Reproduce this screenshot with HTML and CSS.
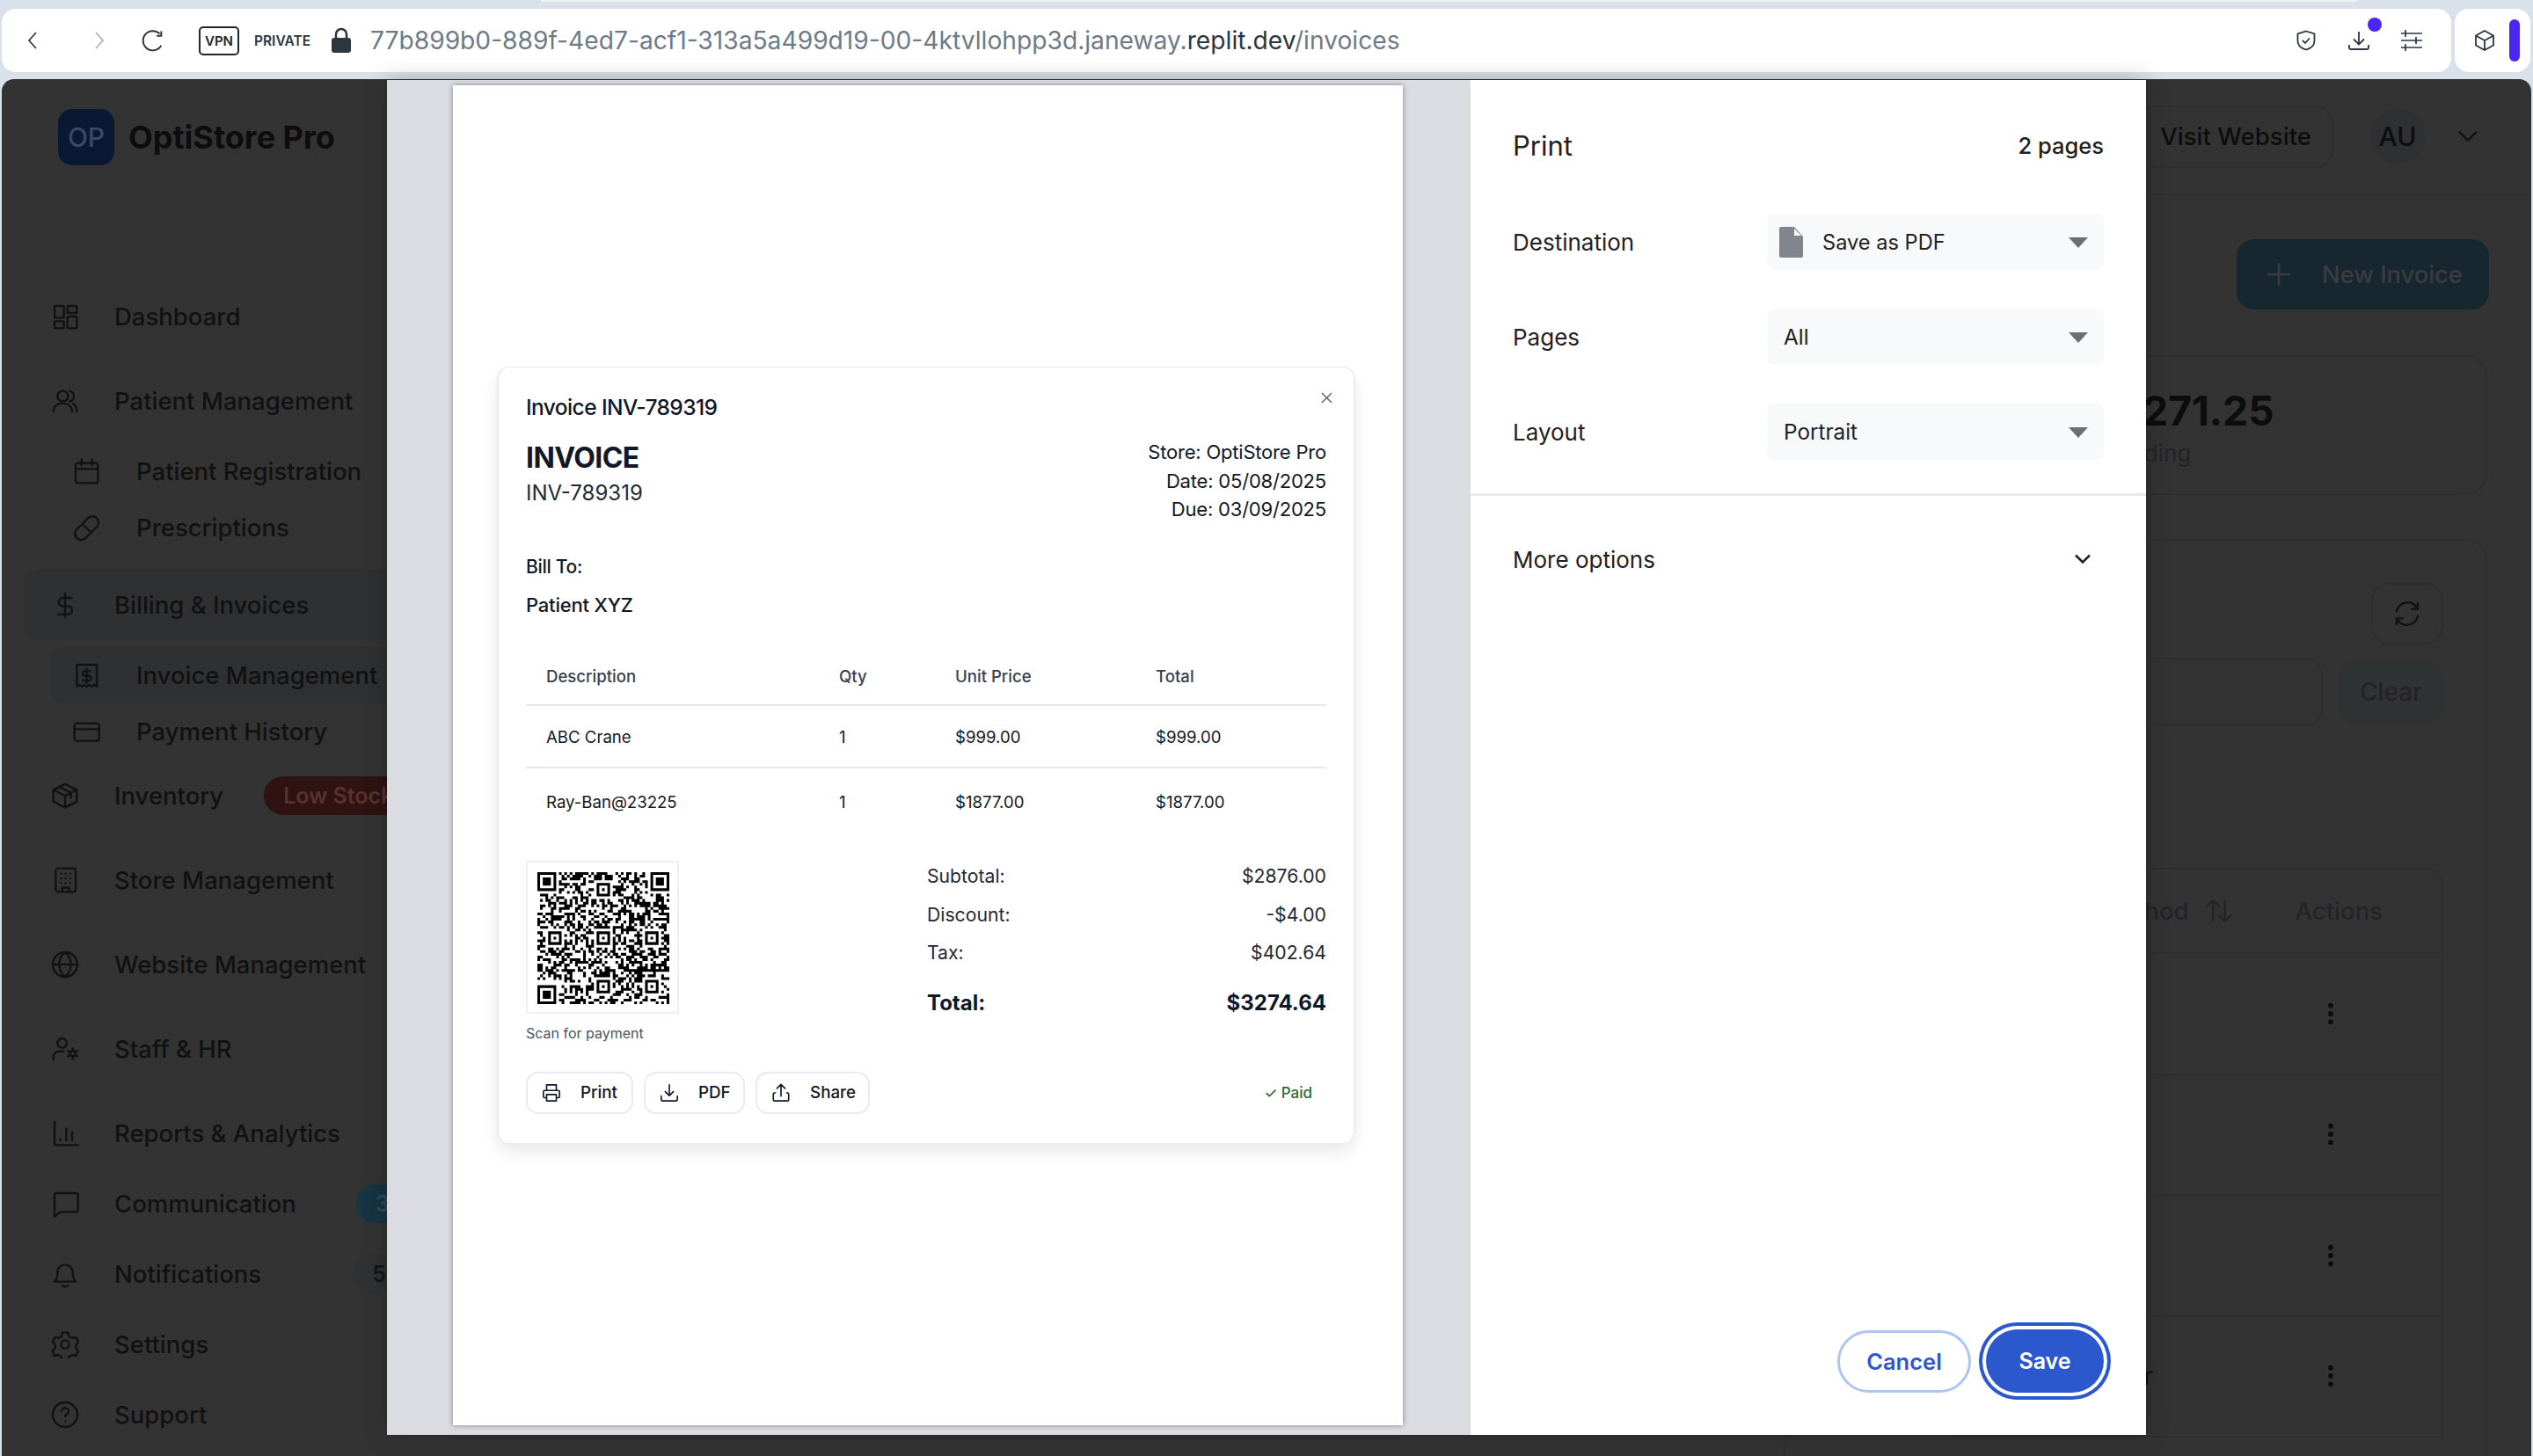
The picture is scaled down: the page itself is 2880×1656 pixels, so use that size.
FILE: index.html
```html
<!DOCTYPE html>
<html lang="en">
<head>
<meta charset="utf-8">
<title>Invoices</title>
<link rel="stylesheet" href="styles.css">
</head>
<body>
<div class="tab-strip"></div>
<div class="chrome">
  <div class="urlbar">
    <svg class="tb back" viewBox="0 0 24 24"><path d="M15 3 7 12l8 9"/></svg>
    <svg class="tb fwd" viewBox="0 0 24 24"><path d="m9 3 8 9-8 9"/></svg>
    <svg class="tb reload" viewBox="0 0 24 24"><path d="M18.5 5.5A9.5 9.5 0 1 0 20 17M20 3v4.5h-4.500"/></svg>
    <span class="vpn">VPN</span>
    <span class="private">PRIVATE</span>
    <svg class="lock" viewBox="0 0 24 30"><path class="lock-loop" d="M6 14V8a6 6 0 0 1 12 0v6"/><rect class="lock-body" x="1" y="12" width="22" height="17" rx="3"/></svg>
    <span class="url">77b899b0-889f-4ed7-acf1-313a5a499d19-00-4ktvllohpp3d.janeway.<b>replit.dev</b>/invoices</span>
    <span class="ext">
      <svg class="tb2" viewBox="0 0 24 24"><path d="M12 1.500 21.500 4.500v8c0 5-4 8.500-9.500 10-5.500-1.500-9.500-5-9.500-10v-8z"/><path d="m8 12 3 3 5-5.500"/></svg>
      <span class="dl"><svg class="tb2" viewBox="0 0 24 24"><path d="M12 2v14M6 10.500l6 6 6-6M1 17v3a2 2 0 0 0 2 2h18a2 2 0 0 0 2-2v-3"/></svg><i class="dot"></i></span>
      <svg class="tb2 sliders" viewBox="0 0 24 24"><path d="M0 4h24M0 12h24M0 20h24"/><path d="M5 0v8M17 8v8M5 16v8"/></svg>
    </span>
  </div>
  <div class="urlbar-side">
    <svg class="tb2" viewBox="0 0 24 24"><path d="m12 1 10 5.500v11L12 23 2 17.500v-11zM2 6.500 12 12l10-5.500M12 12v11"/></svg>
    <i class="side-pill"></i>
  </div>
</div>

<div class="app">
  <aside class="sidebar">
    <div class="brand"><span class="logo">OP</span><span class="brand-name">OptiStore Pro</span></div>
    <nav class="nav">
      <a class="item"><svg class="ic" viewBox="0 0 24 24"><rect x="3" y="3" width="8" height="10" rx="1"/><rect x="14" y="3" width="8" height="6" rx="1"/><rect x="14" y="12" width="8" height="10" rx="1"/><rect x="3" y="16" width="8" height="6" rx="1"/></svg>Dashboard</a>
      <a class="item"><svg class="ic" viewBox="0 0 24 24"><circle cx="10" cy="8" r="4.500"/><path d="M2 21c0-4.500 3.500-7 8-7s8 2.500 8 7M16 3.600a4.500 4.500 0 0 1 0 8.800M19 14.500c2 1 3 3.500 3 6.500"/></svg>Patient Management</a>
      <div class="sub">
        <a class="subitem"><svg class="ic" viewBox="0 0 24 24"><rect x="3" y="5" width="19" height="17" rx="2"/><path d="M3 10h19M8 2v5M17 2v5"/></svg>Patient Registration</a>
        <a class="subitem"><svg class="ic" viewBox="0 0 24 24"><path d="M4 13.500 13.500 4a5.300 5.300 0 0 1 7.500 7.500L11.500 21A5.300 5.300 0 0 1 4 13.500zM8.700 8.800l7.500 7.500"/></svg>Prescriptions</a>
      </div>
      <a class="item active"><svg class="ic" viewBox="0 0 24 24"><path d="M12 2v20M17.500 6H10a3.500 3.500 0 0 0 0 7h4.500a3.500 3.500 0 0 1 0 7H6"/></svg>Billing &amp; Invoices</a>
      <div class="sub last">
        <a class="subitem active"><svg class="ic" viewBox="0 0 24 24"><path d="M4 3h17v18.500l-2-1.300-2 1.300-2-1.300-2.500 1.300-2-1.300-2 1.300-2.500-1.300-2 1.300z"/><path d="M15.500 8.500H11a2 2 0 0 0 0 4h3a2 2 0 0 1 0 4H9M12.500 6.500v12"/></svg>Invoice Management</a>
        <a class="subitem"><svg class="ic" viewBox="0 0 24 24"><rect x="2" y="5" width="21" height="15" rx="2"/><path d="M2 10h21"/></svg>Payment History</a>
      </div>
      <a class="item"><svg class="ic" viewBox="0 0 24 24"><path d="m12 2 10 5v10l-10 5-10-5V7zM2 7l10 5 10-5M12 12v10M7 4.500l10 5v4"/></svg>Inventory<span class="badge low">Low Stock</span></a>
      <a class="item"><svg class="ic" viewBox="0 0 24 24"><rect x="4" y="2" width="17" height="20" rx="2"/><path d="M9.500 22v-3.500h6V22M8.500 6.500h0M12.500 6.500h0M16.500 6.500h0M8.500 10.500h0M12.500 10.500h0M16.500 10.500h0M8.500 14.500h0M12.500 14.500h0M16.500 14.500h0"/></svg>Store Management</a>
      <a class="item"><svg class="ic" viewBox="0 0 24 24"><circle cx="12" cy="12" r="10.500"/><path d="M1.500 12h21M12 1.500c3.500 3 5 6.500 5 10.500s-1.500 7.500-5 10.500c-3.500-3-5-6.500-5-10.500s1.500-7.500 5-10.500z"/></svg>Website Management</a>
      <a class="item"><svg class="ic" viewBox="0 0 24 24"><circle cx="9.500" cy="7" r="4"/><path d="M2 21v-1.500c0-3.500 2.500-5.500 6-5.500h3"/><circle cx="18.500" cy="16" r="2.300"/><path d="M18.500 11.500v2M18.500 18.500v2M14.500 13.700l2 1.100M20.500 17.200l2 1.100M14.500 18.300l2-1.100M20.500 14.800l2-1.100"/></svg>Staff &amp; HR</a>
      <a class="item flush"><svg class="ic" viewBox="0 0 24 24"><path d="M3 2v18a2 2 0 0 0 2 2h18M8 18v-1M13 18V8M18 18v-7"/></svg>Reports &amp; Analytics</a>
      <a class="item flush"><svg class="ic" viewBox="0 0 24 24"><path d="M5 3h16a2 2 0 0 1 2 2v12a2 2 0 0 1-2 2H8l-5 4V5a2 2 0 0 1 2-2z"/></svg>Communication<span class="badge count-blue">3</span></a>
      <a class="item flush"><svg class="ic" viewBox="0 0 24 24"><path d="M3 18.500c2-2 2.500-3.500 2.500-8a6.500 6.500 0 0 1 13 0c0 4.500.5 6 2.500 8zM9.500 22c1.500 1 3.500 1 5 0"/></svg>Notifications<span class="badge count-gray">5</span></a>
      <a class="item flush"><svg class="ic" viewBox="0 0 24 24"><circle cx="12" cy="12" r="3.500"/><path d="M9.500 2h5l.8 3 2.800 1.600 3-.8 2.400 4.200-2.200 2.200v3.400l2.200 2-2.400 4.300-3-.9-2.800 1.600-.8 2.400h-5l-.8-2.400-2.800-1.600-3 .9L1.300 17.300l2.200-2v-3.400L1.300 9.700l2.400-3.900 3 .8 2.800-1.600z"/></svg>Settings</a>
      <a class="item flush"><svg class="ic" viewBox="0 0 24 24"><circle cx="12" cy="12" r="10.500"/><path d="M9 9a3 3 0 0 1 6 .5c0 2-3 2.300-3 4M12 17.500h0"/></svg>Support</a>
    </nav>
  </aside>

  <main class="main">
    <header class="topbar">
      <span class="visit">Visit Website</span>
      <span class="avatar">AU</span>
      <svg class="ic chev" viewBox="0 0 24 24"><path d="m5 8.500 7 7 7-7"/></svg>
    </header>
    <div class="content">
      <div class="title-row">
        <button class="new-btn"><svg class="ic plus" viewBox="0 0 24 24"><path d="M12 3v18M3 12h18"/></svg>New Invoice</button>
      </div>
      <section class="stat">
        <div class="stat-value">$12,271.25</div>
        <div class="stat-label">Outstanding</div>
      </section>
      <section class="list-card">
        <button class="icon-btn"><svg class="ic" viewBox="0 0 24 24"><path d="M3 10a9.500 9.500 0 0 1 17-3.500l1 1.500M21 3v5h-5M21 14a9.500 9.500 0 0 1-17 3.500L3 16M3 21v-5h5"/></svg></button>
        <div class="filters">
          <div class="search"></div>
          <button class="clear">Clear</button>
        </div>
        <div class="table">
          <div class="thead">
            <span>Payment Method</span>
            <svg class="ic sort" viewBox="0 0 24 24"><path d="M7 21V3M2 8l5-5 5 5M17 3v18M12 16l5 5 5-5"/></svg>
            <span class="actions-h">Actions</span>
          </div>
          <div class="trow"><svg class="ic kebab" viewBox="0 0 24 24"><circle cx="12" cy="5" r="1.300"/><circle cx="12" cy="12" r="1.300"/><circle cx="12" cy="19" r="1.300"/></svg></div>
          <div class="trow"><svg class="ic kebab" viewBox="0 0 24 24"><circle cx="12" cy="5" r="1.300"/><circle cx="12" cy="12" r="1.300"/><circle cx="12" cy="19" r="1.300"/></svg></div>
          <div class="trow"><svg class="ic kebab" viewBox="0 0 24 24"><circle cx="12" cy="5" r="1.300"/><circle cx="12" cy="12" r="1.300"/><circle cx="12" cy="19" r="1.300"/></svg></div>
          <div class="trow"><span class="method">Transfer</span><svg class="ic kebab" viewBox="0 0 24 24"><circle cx="12" cy="5" r="1.300"/><circle cx="12" cy="12" r="1.300"/><circle cx="12" cy="19" r="1.300"/></svg></div>
        </div>
      </section>
    </div>
  </main>
</div>

<div class="print-dialog">
  <div class="preview">
    <div class="sheet">
      <article class="invoice">
        <svg class="close" viewBox="0 0 14 14"><path d="m1 1 12 12M13 1 1 13"/></svg>
        <h2 class="inv-title">Invoice INV-789319</h2>
        <div class="inv-head">
          <div>
            <div class="inv-big">INVOICE</div>
            <div class="inv-no">INV-789319</div>
          </div>
          <div class="inv-meta">
            <div>Store: OptiStore Pro</div>
            <div>Date: 05/08/2025</div>
            <div>Due: 03/09/2025</div>
          </div>
        </div>
        <div class="bill-label">Bill To:</div>
        <div class="bill-name">Patient XYZ</div>
        <div class="inv-table">
          <div class="inv-row inv-th"><span>Description</span><span>Qty</span><span>Unit Price</span><span>Total</span></div>
          <div class="inv-row"><span>ABC Crane</span><span>1</span><span>$999.00</span><span>$999.00</span></div>
          <div class="inv-row no-line"><span>Ray-Ban@23225</span><span>1</span><span>$1877.00</span><span>$1877.00</span></div>
        </div>
        <div class="inv-foot">
          <div>
            <div class="qr-box"><svg id="qr" class="qr" viewBox="0 0 49 49" shape-rendering="geometricPrecision"></svg></div>
            <div class="scan">Scan for payment</div>
          </div>
          <div class="summary">
            <div class="sum-row"><span>Subtotal:</span><span>$2876.00</span></div>
            <div class="sum-row"><span>Discount:</span><span>-$4.00</span></div>
            <div class="sum-row"><span>Tax:</span><span>$402.64</span></div>
            <div class="sum-row sum-total"><span>Total:</span><span>$3274.64</span></div>
          </div>
        </div>
        <div class="inv-actions">
          <button class="act act-print"><svg class="act-ic" viewBox="0 0 24 24"><path d="M6 9V2h12v7M6 18H3.500A1.500 1.500 0 0 1 2 16.500v-6A1.500 1.500 0 0 1 3.500 9h17a1.500 1.500 0 0 1 1.500 1.500v6a1.500 1.500 0 0 1-1.500 1.500H18M6 14h12v8H6z"/></svg>Print</button>
          <button class="act act-pdf"><svg class="act-ic" viewBox="0 0 24 24"><path d="M12 2v13M7 10.500l5 5 5-5M2 16v4a2 2 0 0 0 2 2h16a2 2 0 0 0 2-2v-4"/></svg>PDF</button>
          <button class="act act-share"><svg class="act-ic" viewBox="0 0 24 24"><path d="M12 16V2M7 6.500l5-5 5 5M5 12H4a1.500 1.500 0 0 0-1.500 1.500v7A1.500 1.500 0 0 0 4 22h16a1.500 1.500 0 0 0 1.500-1.500v-7A1.500 1.500 0 0 0 20 12h-1"/></svg>Share</button>
          <span class="paid">✓ Paid</span>
        </div>
      </article>
    </div>
  </div>
  <div class="panel">
    <div class="panel-head"><span class="panel-title">Print</span><span class="panel-pages">2 pages</span></div>
    <div class="field first">
      <span class="field-label">Destination</span>
      <div class="select with-file">
        <svg class="file" viewBox="0 0 27 35"><path d="M2 0h15l10 11v22a2 2 0 0 1-2 2H2a2 2 0 0 1-2-2V2a2 2 0 0 1 2-2z"/><path class="fold" d="M17 2v8h8z"/></svg>
        <span>Save as PDF</span><i class="caret"></i>
      </div>
    </div>
    <div class="field">
      <span class="field-label">Pages</span>
      <div class="select"><span>All</span><i class="caret"></i></div>
    </div>
    <div class="field">
      <span class="field-label">Layout</span>
      <div class="select"><span>Portrait</span><i class="caret"></i></div>
    </div>
    <div class="divider"></div>
    <div class="more"><span>More options</span><svg class="more-chev" viewBox="0 0 24 24"><path d="m4 7.500 8 8 8-8"/></svg></div>
    <div class="panel-actions">
      <button class="btn-cancel">Cancel</button>
      <button class="btn-save">Save</button>
    </div>
  </div>
</div>
<script src="qr.js"></script>
</body>
</html>
```
FILE: styles.css
```css
* { box-sizing: border-box; }
html, body { margin: 0; height: 1656px; overflow: hidden; }
body { position: relative; background: #d9e2ea; font-family: Inter, "Liberation Sans", sans-serif; color: #171717; }
button { font: inherit; }

.tab-strip { height: 2px; margin: 0 200px 0 615px; background: #f0f3f6; }
.chrome { display: flex; gap: 4px; height: 72px; margin: 8px 3px 8px 2px; }
.urlbar { flex: 1; display: flex; align-items: center; background: #fff; border-radius: 16px; padding-left: 24px; }
.urlbar-side { width: 86px; display: flex; align-items: center; background: #fff; border-radius: 16px; padding-left: 22px; }
.tb { width: 24px; height: 24px; fill: none; stroke: #2b3640; stroke-width: 1.7; }
.tb.fwd { stroke: #a9b0b7; margin-left: 50px; }
.tb.reload { margin-left: 36px; width: 28px; height: 28px; }
.vpn { margin-left: 38px; width: 46px; height: 33px; border: 2px solid #1d2730; border-radius: 5px; font-size: 15px; font-weight: 600; line-height: 29px; text-align: center; color: #1d2730; }
.private { margin-left: 17px; font-size: 15.500px; font-weight: 600; color: #2b3640; width: 67px; white-space: nowrap; }
.lock { margin-left: 20px; width: 24px; height: 30px; }
.lock-loop { fill: none; stroke: #2b3640; stroke-width: 2.500; }
.lock-body { fill: #2b3640; }
.url { margin-left: 21px; font-size: 28.200px; color: #6e7a87; white-space: nowrap; }
.url b { font-weight: 400; color: #2b3640; }
.ext { margin-left: auto; margin-right: 33px; display: flex; align-items: center; gap: 36px; }
.tb2 { display: block; width: 24px; height: 24px; fill: none; stroke: #2b3640; stroke-width: 1.800; }
.sliders { stroke-width: 1.700; }
.dl { position: relative; display: block; }
.dot { position: absolute; top: -14px; right: -14px; width: 16px; height: 16px; border-radius: 50%; background: #4a26f0; }
.side-pill { margin-left: 16px; width: 12px; height: 48px; border-radius: 6px; background: #4a26f0; }

.app { display: flex; height: 1566px; margin: 0 2px; background: #333; border-radius: 14px 14px 0 0; overflow: hidden; }
.sidebar { width: 520px; flex: none; }
.brand { display: flex; align-items: center; height: 132px; padding-left: 64px; }
.logo { width: 64px; height: 64px; border-radius: 16px; background: #0a1833; color: #3a4963; font-size: 30px; font-weight: 500; display: flex; align-items: center; justify-content: center; }
.brand-name { margin-left: 16px; font-size: 36px; font-weight: 700; color: #0d0d0d; white-space: nowrap; }
.nav { margin-top: 98px; font-size: 27.500px; font-weight: 500; color: #111; }
.item { display: flex; align-items: center; height: 80px; margin: 0 0 16px 25px; padding-left: 31px; border-radius: 20px; white-space: nowrap; }
.item.flush { margin-bottom: 0; }
.sub { margin: -8px 0 16px; }
.sub.last { margin-bottom: 1px; }
.subitem { display: flex; align-items: center; height: 64px; margin-left: 56px; padding-left: 24px; border-radius: 16px; white-space: nowrap; }
.active { background: #2f3032; }
.ic { flex: none; width: 32px; height: 32px; margin-right: 40px; fill: none; stroke: #121212; stroke-width: 1.800; stroke-linecap: round; stroke-linejoin: round; }
.subitem .ic { margin-right: 41px; }
.badge { display: block; margin-left: 46px; height: 44px; min-width: 60px; padding: 0 22px; border-radius: 22px; font-size: 25px; line-height: 44px; font-weight: 600; }
.low { background: #2f1313; color: #5a3030; }
.count-blue { margin-left: 68px; background: #173442; color: #2f4b57; }
.count-gray { margin-left: 104px; background: #303132; color: #141414; }

.main { flex: 1; min-width: 0; }
.topbar { display: flex; align-items: center; justify-content: flex-end; height: 132px; padding-right: 56px; border-bottom: 2px solid #2f2f2f; }
.visit { padding: 0 23px; height: 71px; border: 2px solid #2e2e2e; border-radius: 20px; font-size: 27.600px; font-weight: 500; line-height: 67px; color: #0d0d0d; white-space: nowrap; }
.avatar { margin-left: 42px; width: 62px; height: 62px; border-radius: 50%; background: #2f3031; font-size: 30px; font-weight: 500; line-height: 62px; text-align: center; color: #0d0d0d; }
.chev { margin: 0 0 0 33px; }
.content { padding: 50px 48px 0 0; }
.title-row { display: flex; justify-content: flex-end; }
.new-btn { display: flex; align-items: center; height: 80px; width: 287px; padding-left: 32px; border: 0; border-radius: 20px; background: #162730; color: #3a3c3d; font-size: 27.300px; font-weight: 500; white-space: nowrap; }
.plus { stroke: #3a3c3d; margin-right: 33px; }
.stat { width: 530px; height: 159px; margin: 52px 2px 0 auto; padding: 31px 0 0 42px; border: 2px solid #2f2f2f; border-radius: 24px; }
.stat-value { font-size: 46px; font-weight: 700; line-height: 60px; color: #0d0d0d; white-space: nowrap; }
.stat-label { margin-top: 3px; font-size: 26px; line-height: 32px; color: #232427; }
.list-card { height: 1100px; width: 800px; margin: 50px 2px 0 auto; padding: 48px 48px 0 0; border: 2px solid #2f2f2f; border-radius: 24px; display: flex; flex-direction: column; align-items: flex-end; }
.icon-btn { width: 82px; height: 70px; border: 2px solid #2e2e2e; border-radius: 20px; background: none; padding: 0; display: flex; align-items: center; justify-content: center; }
.icon-btn .ic { margin: 0; stroke-width: 1.800; }
.filters { display: flex; align-items: center; gap: 18px; margin-top: 15px; }
.search { width: 400px; height: 78px; border: 2px solid #2f2f2f; border-radius: 20px; }
.clear { width: 119px; height: 70px; border: 2px solid #303232; border-radius: 20px; background: #303333; color: #232323; font-size: 28px; font-weight: 500; padding: 0; }
.table { width: 560px; margin-top: 161px; border: 2px solid #2f2f2f; border-bottom: 0; border-radius: 20px 20px 0 0; border-left: 0; }
.thead { display: flex; align-items: center; justify-content: flex-end; height: 96px; padding-right: 67px; font-size: 27.500px; font-weight: 500; color: #222429; white-space: nowrap; border-bottom: 2px solid #2f2f2f; }
.sort { margin: 0 0 0 18px; stroke: #222429; }
.actions-h { margin-left: 71px; }
.trow { display: flex; align-items: center; justify-content: flex-end; height: 137.500px; padding-right: 110px; border-bottom: 2px solid #2f2f2f; font-size: 28px; }
.kebab { margin: 0; }
.kebab circle { fill: #0d0d0d; stroke: #0d0d0d; }
.method { margin-right: 186px; color: #111; }

.print-dialog { position: absolute; left: 440px; top: 91px; width: 2000px; height: 1541px; display: flex; background: #fff; box-shadow: 0 0 24px rgba(0,0,0,.25); }
.preview { width: 1232px; flex: none; padding: 6px 0 0 75px; background: #dadce2; }
.sheet { width: 1080px; height: 1524px; padding: 320px 54px 0 50px; background: #fff; box-shadow: 0 0 6px rgba(0,0,0,.4); }
.invoice { position: relative; height: 883px; padding: 0 31px; border: 2px solid #e8ebf1; border-top-width: 1px; border-bottom: 0; border-radius: 14px; box-shadow: 0 10px 18px rgba(0,0,0,.09); color: #111827; }
.close { position: absolute; top: 28px; right: 24px; width: 13px; height: 13px; fill: none; stroke: #5b6069; stroke-width: 1.500; }
.inv-title { margin: 28px 0 0; font-size: 24.500px; line-height: 34px; font-weight: 500; letter-spacing: -.6px; }
.inv-head { display: flex; justify-content: space-between; margin-top: 20px; }
.inv-big { font-size: 32px; line-height: 42px; font-weight: 700; letter-spacing: -.6px; }
.inv-no { font-size: 24px; line-height: 38px; color: #1f2937; }
.inv-meta { margin-top: -2px; font-size: 22px; line-height: 32.500px; letter-spacing: -.2px; text-align: right; }
.bill-label { margin-top: 33px; font-size: 21px; line-height: 32px; font-weight: 500; letter-spacing: -.3px; }
.bill-name { margin-top: 11px; font-size: 22px; line-height: 32px; font-weight: 500; letter-spacing: -.2px; }
.inv-table { margin-top: 33px; font-size: 18.600px; }
.inv-row { display: grid; grid-template-columns: 356px 132px 228px 1fr; align-items: center; justify-items: start; height: 71px; padding-top: 2px; border-bottom: 2px solid #e5e8ee; }
.inv-row span:first-child { padding-left: 23px; }
.inv-th { height: 66px; padding-top: 0; color: #374151; font-weight: 500; }
.no-line { height: 75px; border-bottom: 0; }
.inv-foot { display: flex; justify-content: space-between; margin-top: 30px; }
.qr-box { width: 174px; height: 174px; padding: 11px; border: 2px solid #eef0f5; }
.qr { display: block; width: 150px; height: 150px; }
.scan { margin-top: 10px; font-size: 16px; line-height: 24px; color: #4b5563; }
.summary { width: 454px; margin-top: -4px; font-size: 21.200px; }
.sum-row { display: flex; justify-content: space-between; height: 43.500px; align-items: center; color: #1f2937; }
.sum-total { margin-top: 14px; font-size: 24px; font-weight: 700; color: #111827; }
.inv-actions { display: flex; align-items: center; gap: 12px; margin-top: 32px; }
.act { display: flex; align-items: center; height: 48px; padding: 0; border: 2px solid #e8ebf1; border-radius: 14px; background: #fff; font-size: 18.800px; font-weight: 500; color: #111827; }
.act-print { width: 122px; padding-left: 16px; }
.act-pdf { width: 115px; padding-left: 16px; }
.act-share { width: 130px; padding-left: 16px; }
.act-ic { width: 22px; height: 22px; margin-right: 22px; fill: none; stroke: #111827; stroke-width: 1.800; stroke-linecap: round; stroke-linejoin: round; }
.paid { margin-left: auto; margin-right: 16px; font-size: 17px; font-weight: 500; color: #2f6a3a; }

.panel { flex: 1; margin-left: 0; display: flex; flex-direction: column; padding-top: 50px; }
.panel-head { display: flex; justify-content: space-between; align-items: center; height: 48px; padding: 0 48px; }
.panel-title { font-size: 31px; color: #202124; }
.panel-pages { font-size: 25.500px; font-weight: 500; color: #202124; }
.field { display: flex; align-items: center; justify-content: space-between; margin-top: 44px; padding: 0 48px; }
.field.first { margin-top: 54px; }
.field-label { font-size: 26px; color: #202124; }
.select { position: relative; display: flex; align-items: center; width: 383px; height: 64px; padding-left: 19px; border-radius: 8px; background: #f8f9fb; font-size: 24.300px; color: #202124; }
.with-file { padding-left: 14px; font-size: 23.600px; }
.file { width: 27px; height: 35px; margin-right: 22px; fill: #80868b; }
.fold { fill: #f8f9fb; }
.caret { position: absolute; right: 18px; top: 27px; border: 11px solid transparent; border-top: 12px solid #6b6e76; border-bottom: 0; }
.divider { height: 3px; margin-top: 38px; background: #e9ebf0; }
.more { display: flex; align-items: center; justify-content: space-between; height: 48px; margin-top: 48px; padding: 0 60px 0 48px; font-size: 26px; color: #202124; }
.more-chev { width: 24px; height: 24px; fill: none; stroke: #202124; stroke-width: 2.500; }
.panel-actions { display: flex; align-items: center; justify-content: flex-end; gap: 17px; margin-top: auto; padding: 0 48px 48px 0; }
.btn-cancel { width: 152px; height: 71px; border: 3px solid #adc6f1; border-radius: 36px; background: #fff; color: #2b58cc; font-size: 25.500px; font-weight: 600; padding: 0; }
.btn-save { width: 134px; height: 72px; border: 0; border-radius: 36px; background: #2b58cc; color: #fff; font-size: 25px; font-weight: 600; padding: 0; box-shadow: 0 0 0 4px #fff, 0 0 0 8px #2b58cc; }
```
FILE: qr.js
```js
(function () {
  var size = 49, svg = document.getElementById("qr"), grid = [], seed = 789319;
  function next() { seed = (seed * 1103515245 + 12345) & 0x7fffffff; return (seed >> 16) & 1; }
  for (var y = 0; y < size; y++) { grid[y] = []; for (var x = 0; x < size; x++) grid[y][x] = next(); }
  function square(cx, cy, outer) {
    for (var r = -outer - 1; r <= outer + 1; r++) for (var c = -outer - 1; c <= outer + 1; c++) {
      var yy = cy + r, xx = cx + c;
      if (yy < 0 || xx < 0 || yy >= size || xx >= size) continue;
      var d = Math.max(Math.abs(r), Math.abs(c));
      grid[yy][xx] = (d === outer + 1 || d === outer - 1) ? 0 : 1;
    }
  }
  square(3, 3, 3); square(45, 3, 3); square(3, 45, 3);
  [[24, 6], [6, 24], [24, 24], [42, 24], [24, 42], [42, 42]].forEach(function (p) { square(p[0], p[1], 2); });
  var d = "";
  for (var j = 0; j < size; j++) for (var i = 0; i < size; i++) if (grid[j][i]) d += "M" + i + " " + j + "h1v1h-1z";
  var path = document.createElementNS("http://www.w3.org/2000/svg", "path");
  path.setAttribute("d", d);
  svg.appendChild(path);
})();
```
